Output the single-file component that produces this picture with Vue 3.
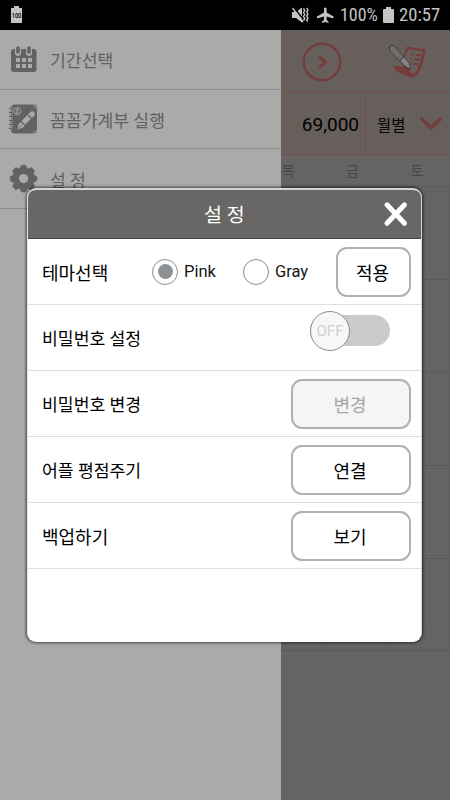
<script setup>
const menu = [
  { icon: 'calendar', label: '기간선택' },
  { icon: 'book', label: '꼼꼼가계부 실행' },
  { icon: 'gear', label: '설 정' },
]
const actions = [
  { label: '비밀번호 변경', button: '변경', disabled: true, compact: true },
  { label: '어플 평점주기', button: '연결', compact: true },
  { label: '백업하기', button: '보기' },
]
const days = ['목', '금', '토']
const teeth = [0, 45, 90, 135, 180, 225, 270, 315]
</script>

<template>
  <div class="screen">
    <header class="status">
      <svg class="saver" width="12" height="18" viewBox="0 0 12 18">
        <path d="M0 2h3V0h5v2h3v15H0z" fill="#c4c4c4" />
        <text x="5.500" y="11.500" text-anchor="middle" font-size="6.500" textLength="9.600" lengthAdjust="spacingAndGlyphs" font-weight="500" fill="#000">100</text>
      </svg>
      <div class="status-right">
        <svg width="17" height="16" viewBox="0 0 17 16" fill="#c4c4c4">
          <path d="M0 5h4l6-4.500v15L4 11H0z" />
          <path d="M1.500 0l11 14" stroke="#000" stroke-width="1.500" />
          <path d="M.5 1l10.500 14" stroke="#c4c4c4" stroke-width="1.500" />
          <path d="M11.500 1.500l1.300 2-1.300 2 1.300 2-1.300 2 1.300 2-1.300 2M14.700 1l1.300 2-1.300 2 1.300 2-1.300 2 1.300 2-1.300 2 1 1.500" fill="none" stroke="#c4c4c4" stroke-width="1.400" />
        </svg>
        <svg class="plane" width="17" height="16" viewBox="0 0 17 16" fill="#c4c4c4">
          <path d="M7 1.500Q8.300-.5 9.600 1.500V5.500L16.500 9.500V11.500L9.600 9.500V13L11.500 14.500V16L8.300 15 5 16V14.500L7 13V9.500L0 11.500V9.500L7 5.500z" />
        </svg>
        <span class="pct">100%</span>
        <svg class="batt" width="11" height="16" viewBox="0 0 11 16"><path d="M1 2h2V0h5v2h2q1 0 1 1v12q0 1-1 1H1q-1 0-1-1V3q0-1 1-1" fill="#c4c4c4" /></svg>
        <span class="time">20:57</span>
      </div>
    </header>

    <div class="body">
      <nav class="drawer">
        <div v-for="item in menu" :key="item.icon" class="item">
          <svg v-if="item.icon === 'calendar'" class="mi" width="32" height="32" viewBox="0 0 32 32">
            <rect x="3" y="6" width="25.500" height="23" rx="3" fill="#616263" />
            <path d="M10 5v5M21 5v5" stroke="#aaa" stroke-width="6" stroke-linecap="round" />
            <path d="M10 5v4M21 5v4" stroke="#616263" stroke-width="3.600" stroke-linecap="round" />
            <path d="M8 17h4M14 17h4M20 17h4M8 23h4M14 23h4M20 23h4" stroke="#aaa" stroke-width="4" />
          </svg>
          <svg v-else-if="item.icon === 'book'" class="mi" width="32" height="32" viewBox="0 0 32 32">
            <rect x="3" y="1.500" width="26" height="29" rx="3.500" fill="#616263" />
            <path d="M1 5.500h4M1 9.500h4M1 13.500h4M1 17.500h4M1 21.500h4M1 25.500h4" stroke="#aaa" stroke-width="2.600" />
            <path d="M1 5.500h4M1 9.500h4M1 13.500h4M1 17.500h4M1 21.500h4M1 25.500h4" stroke="#616263" stroke-width="1.400" />
            <path d="M25.500 2l3 3.500M25.500 30l3-3" stroke="#aaa" stroke-width="1" />
            <circle cx="9.200" cy="8.200" r="3.600" fill="none" stroke="#a2a2a2" />
            <path d="M10.700 6.700q-3-1-2.800.5l2.500 1.500q.5 1.500-2.800.7M9.200 5.500v5.500" fill="none" stroke="#a2a2a2" stroke-width=".8" />
            <path d="M13.500 18l9-9q1.800-1.500 3.500.2t.2 3.500l-9 9z" fill="#aaa" />
            <path d="M12.700 19l4 4-2 1.800-5.500 2 1.500-5.500z" fill="#aaa" />
            <path d="M20 12l4 4" stroke="#616263" stroke-width="1.200" />
            <path d="M10 25.800l4-4" stroke="#616263" stroke-width=".8" />
          </svg>
          <svg v-else class="mi" width="32" height="32" viewBox="0 0 32 32">
            <g fill="#616263" transform="translate(15.600 15.600)">
              <circle r="10.500" />
              <path v-for="t in teeth" :key="t" d="M-4-9.500L-2.200-13.400H2.200L4-9.500z" stroke="#616263" stroke-width=".5" stroke-linejoin="round" :transform="`rotate(${t})`" />
              <circle r="4.600" fill="#aaa" />
            </g>
          </svg>
          <span>{{ item.label }}</span>
        </div>
      </nav>

      <main class="calendar">
        <div class="tools">
          <svg width="40" height="40" viewBox="0 0 40 40" fill="none" stroke="#743c3b">
            <circle cx="20" cy="20" r="18.300" stroke-width="2.400" />
            <path d="M17 14.500l6.500 5.700-6.500 5.700" stroke-width="3" />
          </svg>
          <svg class="note" width="40" height="36" viewBox="0 0 40 36">
            <path d="M19 2.500L37.500 5.500Q37 12 34 21T28 32Q24 34.500 19.500 32.500L8.500 27.500Q5 24 6.500 22Q10 21 15 23.500L14 15.500z" fill="#743c3b" />
            <path d="M20.500 5L34.800 7.500Q33.500 14 31 20.500 28.500 29.500 25 30 21.500 29 22 23L16 15z" fill="#675f5c" />
            <path d="M23.500 10.500h2M27.500 11h5.500M22 15h2M26 15.500h5.500M23.500 19.500l6.500 1" stroke="#743c3b" stroke-width="2" />
            <path d="M1.500 2.500Q4 0 6.500 2.500L16 12.500l-4.200 4.700L1.500 7z" fill="#716d6c" stroke="#363333" stroke-width=".8" />
            <path d="M12 16.500l4-3.800 5 6 2 6.300-6-2.500z" fill="#858281" stroke="#363333" stroke-width=".8" />
          </svg>
        </div>
        <div class="summary">
          <div class="amount">69,000</div>
          <div class="mode">
            <span>월별</span>
            <svg width="24" height="15" viewBox="0 0 24 15"><path d="M1.500 2L12 11.800 22.500 2" fill="none" stroke="#743c3b" stroke-width="3.400" /></svg>
          </div>
        </div>
        <div class="days"><span v-for="d in days" :key="d">{{ d }}</span></div>
        <div class="grid"><i v-for="n in 15" :key="n"></i></div>
      </main>
    </div>

    <section class="dialog">
      <div class="title">
        <h1>설 정</h1>
        <svg class="close" width="26" height="26" viewBox="0 0 26 26"><path d="M4 3.800L21.500 22.300M21.500 3.800L4 22.300" stroke="#fff" stroke-width="5" stroke-linecap="round" /></svg>
      </div>
      <div class="row">
        <span class="label theme">테마선택</span>
        <span class="radio on"></span><span class="opt pink">Pink</span>
        <span class="radio"></span><span class="opt">Gray</span>
        <button class="btn small">적용</button>
      </div>
      <div class="row">
        <span class="label compact">비밀번호 설정</span>
        <div class="switch"><span class="knob">OFF</span></div>
      </div>
      <div v-for="a in actions" :key="a.label" class="row">
        <span class="label" :class="{ compact: a.compact }">{{ a.label }}</span>
        <button class="btn" :class="{ off: a.disabled }">{{ a.button }}</button>
      </div>
    </section>
  </div>
</template>

<style>
body { margin: 0; }
</style>

<style scoped>
* { box-sizing: border-box; }
.screen { position: relative; width: 450px; height: 800px; overflow: hidden; background: #656462; font-family: Roboto, "Noto Sans CJK KR", sans-serif; color: #000; }
svg { display: block; flex: none; }
.status { height: 30px; background: #000; display: flex; justify-content: space-between; align-items: center; padding: 0 10px 0 11px; color: #c4c4c4; }
.status-right { display: flex; align-items: center; }
.plane { margin-left: 8px; }
.pct, .time { font-size: 19px; line-height: 30px; white-space: nowrap; transform-origin: left; }
.pct { width: 39px; margin-left: 6px; transform: scaleX(.86); }
.pct, .time { font-family: "Roboto Condensed", Roboto, sans-serif; }
.pct { transform: scaleX(.945); }
.batt { margin-left: 4px; }
.time { width: 41px; margin-left: 5px; transform: scaleX(.98); }
.body { display: flex; height: 770px; }
.drawer { width: 281px; background: #aaa; flex: none; }
.item { height: 59.670px; border-bottom: 1px solid #8b8b8b; display: flex; align-items: center; padding-left: 8px; color: #5f6061; font-size: 17.200px; }
.item span { margin-left: 10px; padding-top: 1px; white-space: pre; }
.calendar { flex: 1; min-width: 0; }
.tools { height: 62px; background: #675f5c; display: flex; align-items: center; padding: 2px 0 0 21px; }
.note { margin: 0 0 0 46px; }
.summary { height: 63px; display: flex; background: #675f5c; border-top: 1px solid #744d4c; border-bottom: 1px solid #744d4c; }
.amount { width: 85px; border-right: 1px solid #744d4c; text-align: right; padding-right: 6px; font-size: 19px; line-height: 63px; }
.mode { display: flex; align-items: center; font-size: 15.400px; padding-left: 11px; }
.mode svg { margin-left: 14px; }
.days { height: 31px; display: flex; font-size: 13.500px; line-height: 33px; color: #454443; }
.days span { width: 64.500px; flex: none; padding-left: 1px; }
.grid { display: grid; grid-template-columns: 40px 64px 64px; grid-auto-rows: 92.900px; border-top: 1px solid #5c5b59; }
.grid i { border-right: 1px solid #5e5d5b; border-bottom: 1px solid #5a5957; }
.dialog { position: absolute; left: 27px; top: 188px; width: 395px; height: 454px; border-style: solid; border-color: #d5d5d5 #d5d5d5 #fff #e9e9e9; border-width: 2px 1px 1px 1px; border-radius: 9px; background: #fff; box-shadow: 0 0 3px 1px rgba(0,0,0,.6); overflow: hidden; }
.title { height: 49px; background: #686765; border-bottom: 1px solid #454545; display: flex; align-items: center; padding-left: 176px; color: #fff; }
h1 { margin: 0; padding-top: 3px; font-size: 19.500px; font-weight: 400; line-height: 45px; width: 179px; white-space: pre; }
.row { height: 66px; border-bottom: 1px solid #dedede; display: flex; align-items: center; padding: 0 10px 0 14px; }
.label { font-size: 18px; white-space: pre; }
.compact { font-size: 17.200px; }
.theme { width: 110px; }
.radio { width: 26px; height: 26px; border: 1px solid #8b8b8b; border-radius: 50%; display: grid; place-items: center; flex: none; }
.radio.on::after { content: ''; width: 15px; height: 15px; border-radius: 50%; background: #8d9194; }
.opt { font-size: 16.500px; margin-left: 6px; color: #151515; }
.pink { width: 59px; }
.btn { margin: 0 0 0 auto; width: 120px; height: 50px; padding: 0 2px 0 0; border: 2px solid #b0b0b0; border-radius: 11px; background: #fff; color: #000; font: 18px "Noto Sans CJK KR", sans-serif; }
.small { width: 75px; }
.off { background: #f5f5f5; color: #a5a5a5; }
.switch { width: 80px; height: 31px; border-radius: 16px; background: #cbcbcb; margin: -14px 21px 0 auto; display: flex; align-items: center; }
.knob { width: 40px; height: 40px; flex: none; border: 1px solid #8b8b8b; border-radius: 50%; background: #f7f7f7; color: #d1d1d1; font-size: 15px; line-height: 39px; text-align: center; }
</style>
